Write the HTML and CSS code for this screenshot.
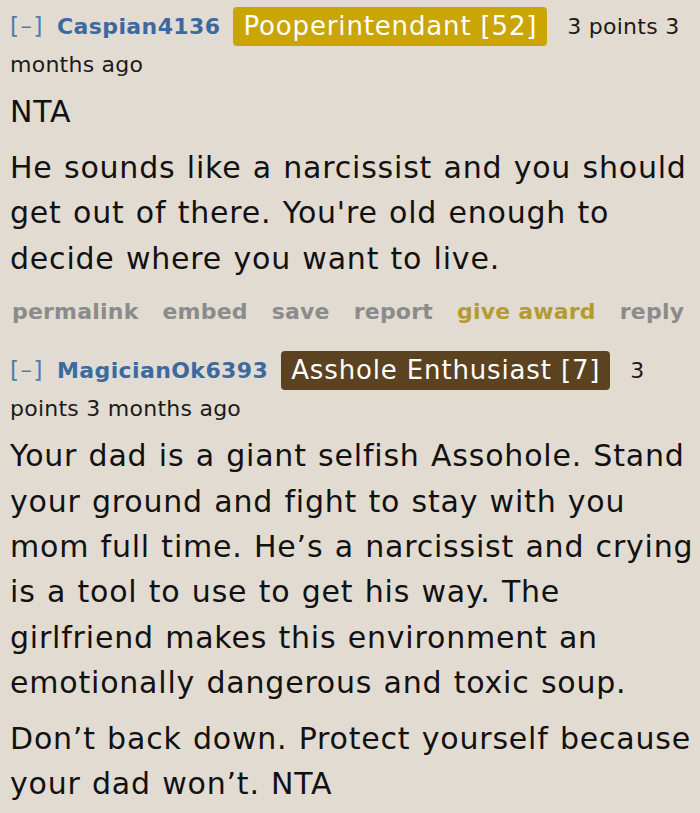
FILE: index.html
```html
<!DOCTYPE html>
<html>
<head>
<meta charset="utf-8">
<link rel="stylesheet" href="styles.css">
</head>
<body>
<div class="thread">
  <div class="comment">
    <p class="tagline"><span class="expand">[–]</span><span class="author">Caspian4136</span><span class="flair flair-gold">Pooperintendant [52]</span><span class="score">3 points</span> <span class="time">3 months ago</span></p>
    <div class="md">
      <p>NTA</p>
      <p>He sounds like a narcissist and you should get out of there. You're old enough to decide where you want to live.</p>
    </div>
    <ul class="buttons">
      <li>permalink</li>
      <li>embed</li>
      <li>save</li>
      <li>report</li>
      <li class="award">give award</li>
      <li>reply</li>
    </ul>
  </div>
  <div class="comment">
    <p class="tagline"><span class="expand">[–]</span><span class="author">MagicianOk6393</span><span class="flair flair-brown">Asshole Enthusiast [7]</span><span class="score">3 points</span> <span class="time">3 months ago</span></p>
    <div class="md">
      <p>Your dad is a giant selfish Assohole. Stand your ground and fight to stay with you mom full time. He’s a narcissist and crying is a tool to use to get his way. The girlfriend makes this environment an emotionally dangerous and toxic soup.</p>
      <p>Don’t back down. Protect yourself because your dad won’t. NTA</p>
    </div>
  </div>
</div>
</body>
</html>
```

FILE: styles.css
```css
html, body {
  margin: 0;
  padding: 0;
  background: #e2dbd2;
}
body {
  font-family: "DejaVu Sans", Verdana, sans-serif;
  color: #111;
}
.thread {
  padding: 7px 4px 0 10px;
}
.tagline {
  margin: 0;
  font-size: 22px;
  line-height: 38px;
  color: #1a1a1a;
  letter-spacing: 0.25px;
}
.expand {
  color: #4f7cae;
  font-size: 23px;
  letter-spacing: 1.5px;
  margin-right: 13px;
}
.author {
  color: #3a6aa0;
  font-weight: bold;
  letter-spacing: 0.4px;
  margin-right: 13px;
}
.flair {
  display: inline-block;
  font-size: 26px;
  line-height: 39px;
  padding: 0 10px;
  margin: 0 20px -1px 0;
  border-radius: 4px;
  color: #fff;
  letter-spacing: 0.85px;
  vertical-align: top;
}
.flair-gold {
  background: #c9a505;
}
.flair-brown {
  background: #5b4220;
}
.md {
  font-size: 30px;
  line-height: 45.4px;
  letter-spacing: 0.8px;
  word-spacing: 1px;
  margin-top: 5px;
}
.md p {
  margin: 0 0 10.5px 0;
}
.md p:last-child {
  margin-bottom: 0;
}
.buttons {
  list-style: none;
  padding: 0 0 0 2px;
  display: flex;
  gap: 24px;
  font-size: 22px;
  font-weight: bold;
  letter-spacing: 0.2px;
  color: #8b8b8b;
  line-height: 30px;
  margin: 16px 0 24px 0;
}
.buttons .award {
  color: #b39b32;
}
```
